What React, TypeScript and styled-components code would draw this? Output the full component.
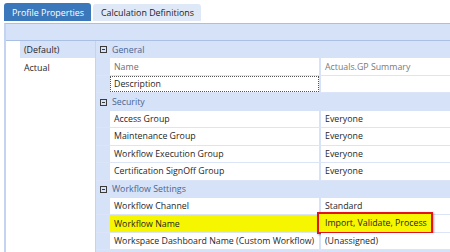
import React from 'react';
import styled, { createGlobalStyle } from 'styled-components';

const GlobalStyle = createGlobalStyle`
  *, *::before, *::after {
    box-sizing: border-box;
  }
  html, body {
    margin: 0;
    padding: 0;
    background: #ffffff;
  }
  body {
    font-family: "Open Sans", "Noto Sans", "Liberation Sans", sans-serif;
  }
`;

type Prop = {
  name: string;
  value?: string;
  readOnly?: boolean;
  focused?: boolean;
  highlight?: boolean;
};

type Category = {
  title: string;
  props: Prop[];
};

const categories: Category[] = [
  {
    title: 'General',
    props: [
      { name: 'Name', value: 'Actuals.GP Summary', readOnly: true },
      { name: 'Description', value: '', focused: true },
    ],
  },
  {
    title: 'Security',
    props: [
      { name: 'Access Group', value: 'Everyone' },
      { name: 'Maintenance Group', value: 'Everyone' },
      { name: 'Workflow Execution Group', value: 'Everyone' },
      { name: 'Certification SignOff Group', value: 'Everyone' },
    ],
  },
  {
    title: 'Workflow Settings',
    props: [
      { name: 'Workflow Channel', value: 'Standard' },
      { name: 'Workflow Name', value: 'Import, Validate, Process', highlight: true },
      { name: 'Workspace Dashboard Name (Custom Workflow)', value: '(Unassigned)' },
    ],
  },
];

const ROW = '17.45px';

const Screen = styled.div`
  width: 450px;
  height: 252px;
  overflow: hidden;
  background: #ffffff;
  font-size: 8.8px;
  color: #1f1f1f;
`;

const TabStrip = styled.div`
  display: flex;
  align-items: flex-start;
  gap: 2px;
  padding: 3px 0 0 4px;
  height: 23px;
`;

const Tab = styled.div<{ $active?: boolean }>`
  display: flex;
  align-items: center;
  padding: 0 7px 0 8px;
  height: ${(p) => (p.$active ? '18px' : '17px')};
  margin-top: ${(p) => (p.$active ? '0' : '1px')};
  border-radius: 3px 3px 0 0;
  background: ${(p) => (p.$active ? '#3a78bb' : '#dfe8f7')};
  color: ${(p) => (p.$active ? '#ffffff' : '#222222')};
  font-size: 8.9px;
  white-space: nowrap;
`;

const Panel = styled.div`
  margin-left: 4px;
  border-top: 1px solid #a9bfe4;
  border-left: 2px solid #c4d4f0;
  display: flex;
  flex-direction: column;
`;

const HeaderBand = styled.div`
  height: 17px;
  background: #d6e2f7;
  border-bottom: 1px solid #a9bfe4;
`;

const Body = styled.div`
  display: flex;
  height: 220px;
`;

const ListColumn = styled.div`
  width: 90px;
  padding-left: 14px;
  background: #ffffff;
  border-right: 1px solid #c4d4f0;
`;

const ListItem = styled.div<{ $selected?: boolean }>`
  height: ${ROW};
  display: flex;
  align-items: center;
  padding-left: 4px;
  font-size: 8.9px;
  background: ${(p) => (p.$selected ? '#d6e2f7' : 'transparent')};
`;

const Grid = styled.div`
  flex: 1;
  background: #d6e2f7;
  display: flex;
  flex-direction: column;
`;

const CategoryRow = styled.div`
  height: ${ROW};
  display: flex;
  align-items: center;
  color: #4a6592;
  background: #d6e2f7;
`;

const Toggle = styled.span`
  width: 7px;
  height: 7px;
  border: 1px solid #3b3b3b;
  margin: 0 5px 0 4px;
  position: relative;
  flex: none;
  &::after {
    content: '';
    position: absolute;
    left: 1px;
    right: 1px;
    top: 2px;
    height: 1px;
    background: #3b3b3b;
  }
`;

const PropRow = styled.div`
  height: ${ROW};
  display: grid;
  grid-template-columns: 14px 209px 2px 1fr;
  border-bottom: 1px solid #dbe5f7;
`;

const NameCell = styled.div<{ $readOnly?: boolean; $focused?: boolean; $highlight?: boolean }>`
  grid-column: 2;
  display: flex;
  align-items: center;
  padding-left: 3px;
  white-space: nowrap;
  overflow: hidden;
  background: ${(p) => (p.$highlight ? '#f6f600' : '#ffffff')};
  color: ${(p) => (p.$readOnly ? '#6f6f6f' : '#1f1f1f')};
  border: 1px dotted ${(p) => (p.$focused ? '#555555' : 'transparent')};
`;

const ValueCell = styled.div<{ $readOnly?: boolean }>`
  grid-column: 4;
  display: flex;
  align-items: center;
  padding-left: 4px;
  background: #ffffff;
  white-space: nowrap;
  color: ${(p) => (p.$readOnly ? '#7a7a7a' : '#1f1f1f')};
  position: relative;
`;

const Callout = styled.div`
  position: absolute;
  left: -4px;
  top: -3px;
  width: 116px;
  height: 22px;
  border: 2px solid #e0141e;
  background: #f6f600;
  display: flex;
  align-items: center;
  padding-left: 6px;
  box-shadow: 1px 1px 2px rgba(0, 0, 0, 0.35);
`;

export default function App() {
  return (
    <Screen>
      <GlobalStyle />
      <TabStrip>
        <Tab $active>Profile Properties</Tab>
        <Tab>Calculation Definitions</Tab>
      </TabStrip>
      <Panel>
        <HeaderBand />
        <Body>
          <ListColumn>
            <ListItem $selected>(Default)</ListItem>
            <ListItem>Actual</ListItem>
          </ListColumn>
          <Grid>
            {categories.map((cat) => (
              <React.Fragment key={cat.title}>
                <CategoryRow>
                  <Toggle />
                  {cat.title}
                </CategoryRow>
                {cat.props.map((p) => (
                  <PropRow key={p.name}>
                    <NameCell $readOnly={p.readOnly} $focused={p.focused} $highlight={p.highlight}>
                      {p.name}
                    </NameCell>
                    <ValueCell $readOnly={p.readOnly}>
                      {p.highlight ? <Callout>{p.value}</Callout> : p.value}
                    </ValueCell>
                  </PropRow>
                ))}
              </React.Fragment>
            ))}
          </Grid>
        </Body>
      </Panel>
    </Screen>
  );
}
